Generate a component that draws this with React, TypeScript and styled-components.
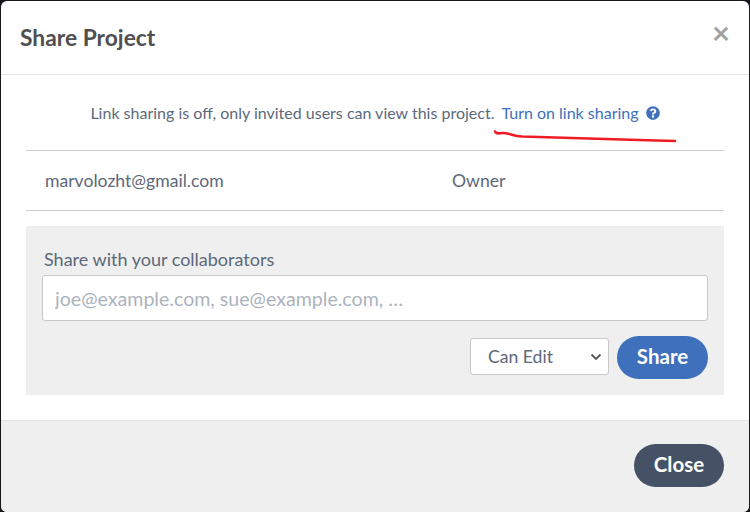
import React from 'react'
import styled, { createGlobalStyle } from 'styled-components'
import { FaQuestionCircle } from 'react-icons/fa'

const GlobalStyle = createGlobalStyle`
  html, body {
    margin: 0;
    padding: 0;
    height: 100%;
    overflow: hidden;
    background: #17171c;
  }
  * {
    box-sizing: border-box;
  }
`

const Page = styled.div`
  width: 750px;
  height: 512px;
  padding: 1px 1px 0 1px;
  font-family: Lato, 'Liberation Sans', sans-serif;
  color: #5d6879;
  font-size: 16px;
`

const Dialog = styled.div`
  position: relative;
  height: 511px;
  background: #fff;
  border-radius: 6px;
  display: flex;
  flex-direction: column;
  overflow: hidden;
`

const Header = styled.header`
  flex: 0 0 74px;
  border-bottom: 1px solid #e5e5e5;
  padding: 0 19px;
  display: flex;
  align-items: center;
  justify-content: space-between;
`

const Title = styled.h3`
  margin: 0 0 2px;
  font-size: 22.8px;
  font-weight: 700;
  color: #505050;
`

const CloseIcon = styled.button`
  border: 0;
  padding: 0;
  background: none;
  font-family: inherit;
  font-size: 31px;
  line-height: 30px;
  font-weight: 700;
  color: #a0a0a0;
  margin: 0 0 12px;
`

const Body = styled.div`
  flex: 1;
  padding: 0 25px 25px;
  display: flex;
  flex-direction: column;
`

const LinkRow = styled.div`
  flex: 0 0 75px;
  display: flex;
  align-items: center;
  justify-content: center;
  font-size: 16px;
  white-space: nowrap;
`

const LinkText = styled.a`
  color: #3e70bb;
  margin-left: 7px;
`

const HelpIcon = styled(FaQuestionCircle)`
  color: #3e70bb;
  width: 14px;
  height: 14px;
  margin-left: 7px;
`

const Scribble = styled.svg`
  position: absolute;
  left: 0;
  top: 0;
  pointer-events: none;
`

const MemberRow = styled.div`
  height: 61px;
  border-top: 1px solid #cfcfcf;
  border-bottom: 1px solid #cfcfcf;
  display: grid;
  grid-template-columns: 407px 1fr;
  align-items: center;
  padding-left: 19px;
  font-size: 17.6px;
  margin-bottom: 15px;
`

const SharePanel = styled.div`
  height: 169px;
  background: #efefef;
  padding: 22px 16px 0;
  display: flex;
  flex-direction: column;
`

const Label = styled.label`
  font-size: 18px;
  line-height: 22px;
  padding-left: 2px;
  margin-bottom: 5px;
`

const EmailInput = styled.input`
  height: 46px;
  width: 666px;
  border: 1px solid #c8c8c8;
  border-radius: 3px;
  background: #fff;
  padding: 0 12px;
  font-family: inherit;
  font-size: 19.6px;
  color: #5d6879;

  &::placeholder {
    color: #adb3bd;
    opacity: 1;
  }
`

const Actions = styled.div`
  display: flex;
  justify-content: flex-end;
  align-items: center;
  gap: 8px;
  margin-top: 15px;
`

const SelectWrap = styled.div`
  position: relative;
  width: 139px;
  height: 37px;
  background: #fff;
  border: 1px solid #c8c8c8;
  border-radius: 3px;
  display: flex;
  align-items: center;
  margin-bottom: 2px;
  padding: 0 0 1px 17px;
  font-size: 17.6px;
`

const Caret = styled.svg`
  position: absolute;
  right: 6px;
  top: 14px;
`

const Pill = styled.button<{ $bg: string; $width: number }>`
  width: ${(p) => p.$width}px;
  height: 43px;
  border: 0;
  border-radius: 22px;
  background: ${(p) => p.$bg};
  color: #fff;
  font-family: inherit;
  font-size: 20.5px;
  font-weight: 700;
  padding: 0 0 3px;
`

const Footer = styled.footer`
  flex: 0 0 92px;
  background: #efefef;
  border-top: 1px solid #e5e5e5;
  padding: 23px 25px 0 0;
  display: flex;
  justify-content: flex-end;
  align-items: flex-start;
`

export default function App() {
  return (
    <Page>
      <GlobalStyle />
      <Dialog>
        <Header>
          <Title>Share Project</Title>
          <CloseIcon>×</CloseIcon>
        </Header>
        <Body>
          <LinkRow>
            <span>Link sharing is off, only invited users can view this project.</span>
            <LinkText>Turn on link sharing</LinkText>
            <HelpIcon />
          </LinkRow>
          <MemberRow>
            <span>marvolozht@gmail.com</span>
            <span>Owner</span>
          </MemberRow>
          <SharePanel>
            <Label>Share with your collaborators</Label>
            <EmailInput placeholder="joe@example.com, sue@example.com, …" />
            <Actions>
              <SelectWrap>
                Can Edit
                <Caret width="12" height="8" viewBox="0 0 12 8">
                  <path d="M1.5 1.5 L6 6 L10.5 1.5" fill="none" stroke="#555" strokeWidth="1.8" />
                </Caret>
              </SelectWrap>
              <Pill $bg="#3e70bb" $width={91}>Share</Pill>
            </Actions>
          </SharePanel>
        </Body>
        <Footer>
          <Pill $bg="#455266" $width={90}>Close</Pill>
        </Footer>
        <Scribble width="748" height="511">
          <path
            d="M494 130.5 C495 133 498 132.5 502 132 C508 132 512 135 521 135.5 C560 136.5 620 138.5 674 140"
            fill="none"
            stroke="#ee1c25"
            strokeWidth="2.6"
            strokeLinecap="round"
          />
        </Scribble>
      </Dialog>
    </Page>
  )
}
